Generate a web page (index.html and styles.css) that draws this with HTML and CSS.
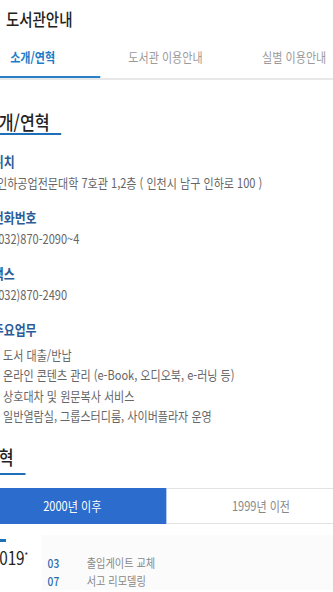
FILE: index.html
```html
<!DOCTYPE html>
<html lang="ko">
<head>
<meta charset="utf-8">
<title>도서관안내</title>
<link rel="stylesheet" href="styles.css">
</head>
<body>
<div class="page">
  <header class="top">도서관안내</header>
  <nav class="tabs">
    <a class="tab tab-active">소개/연혁</a>
    <a class="tab tab-2">도서관 이용안내</a>
    <a class="tab tab-3">실별 이용안내</a>
  </nav>
  <main class="content">
    <h2 class="sec-title">소개/연혁</h2>
    <dl class="info">
      <dt>위치</dt>
      <dd class="addr">인하공업전문대학 7호관 1,2층 ( 인천시 남구 인하로 100 )</dd>
      <dt>전화번호</dt>
      <dd>(032)870-2090~4</dd>
      <dt>팩스</dt>
      <dd>(032)870-2490</dd>
      <dt>주요업무</dt>
      <dd>
        <ul class="duties">
          <li>- 도서 대출/반납</li>
          <li>- 온라인 콘텐츠 관리 (e-Book, 오디오북, e-러닝 등)</li>
          <li>- 상호대차 및 원문복사 서비스</li>
          <li>- 일반열람실, 그룹스터디룸, 사이버플라자 운영</li>
        </ul>
      </dd>
    </dl>
    <h2 class="sec-title sec-title-2">연혁</h2>
    <div class="year-tabs">
      <button class="ytab ytab-on">2000년 이후</button>
      <button class="ytab">1999년 이전</button>
    </div>
    <div class="timeline">
      <div class="year"><span class="bar"></span><span class="year-num">2019<sup>*</sup></span></div>
      <ul class="events">
        <li><span class="mon">03</span>출입게이트 교체</li>
        <li><span class="mon">07</span>서고 리모델링</li>
      </ul>
    </div>
  </main>
</div>
</body>
</html>
```

FILE: styles.css
```css
html, body {
  margin: 0;
  padding: 0;
  background: #fff;
  overflow: hidden;
}
body {
  width: 333px;
  height: 592px;
  font-family: "Noto Sans CJK KR", "Noto Sans", sans-serif;
  color: #333;
}
.page {
  width: 392px;
  transform: scaleX(0.85);
  transform-origin: 0 0;
}
.top {
  height: 38px;
  line-height: 38px;
  padding-left: 7px;
  font-size: 17px;
  font-weight: 500;
  color: #222;
}
.tabs {
  display: flex;
  height: 40px;
  border-bottom: 2px solid #e8e8e8;
  white-space: nowrap;
}
.tab {
  display: block;
  line-height: 38px;
  font-size: 13px;
  color: #9a9a9a;
  border-bottom: 2px solid transparent;
}
.tab-active {
  width: 118px;
  box-sizing: border-box;
  padding-left: 12px;
  color: #1b7cc7;
  font-weight: 700;
  border-bottom-color: #2a7fc6;
}
.tab-2 { padding-left: 33px; }
.tab-3 { padding-left: 70px; }
.content {
  margin-left: -19px;
}
.sec-title {
  display: inline-block;
  margin: 31px 0 0;
  padding-right: 14px;
  font-size: 19px;
  font-weight: 500;
  line-height: 22px;
  color: #222;
  border-bottom: 2px solid #1f6fb8;
}
.sec-title-2 {
  margin-top: 19px;
  padding-bottom: 5px;
}
.info {
  margin: 0;
  padding-left: 10.5px;
}
.info dt {
  margin-top: 14px;
  font-size: 14px;
  font-weight: 700;
  line-height: 20px;
  color: #2b5b97;
}
.info dt:first-child {
  margin-top: 16px;
}
.info dd {
  margin: 2px 0 0 2px;
  font-size: 13px;
  line-height: 20px;
  color: #666;
  white-space: nowrap;
}
.info .addr {
  margin-left: 5px;
}
.duties {
  list-style: none;
  margin: 6px 0 0;
  padding: 0 0 0 2px;
}
.duties li {
  line-height: 20.4px;
}
.year-tabs {
  display: grid;
  grid-template-columns: 222px 222px;
  margin: 13px 0 0 -7px;
}
.ytab {
  height: 36px;
  margin: 0;
  padding: 0;
  border: 0;
  border-top: 1px solid #e3e3e3;
  border-bottom: 1px solid #e3e3e3;
  background: #fff;
  font-family: inherit;
  font-size: 13px;
  color: #888;
}
.ytab-on {
  background: #2b6ccd;
  border-color: #2b6ccd;
  color: #fff;
}
.timeline {
  display: flex;
  align-items: flex-start;
}
.year {
  display: flex;
  flex-direction: column;
  width: 60px;
  flex: none;
  margin-left: 8px;
}
.bar {
  display: block;
  width: 18px;
  height: 3px;
  margin-top: 15px;
  background: #1f6fb8;
}
.year-num {
  margin-top: 3px;
  font-size: 18px;
  line-height: 22px;
  color: #222;
  white-space: nowrap;
}
.year sup {
  font-size: 9px;
  vertical-align: 6px;
}
.events {
  flex: 1;
  list-style: none;
  margin: 11px 0 0;
  padding: 19px 0 0 7px;
  background: #fbfbfb;
}
.events li {
  font-size: 12px;
  line-height: 18px;
  color: #888;
}
.mon {
  display: inline-block;
  width: 46px;
  color: #2b6aae;
  font-weight: 500;
}
```
